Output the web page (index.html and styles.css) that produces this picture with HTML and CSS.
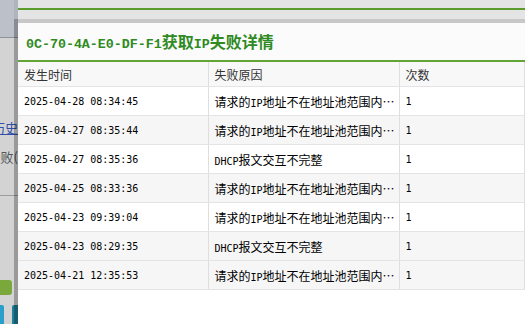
FILE: index.html
```html
<!DOCTYPE html>
<html lang="zh-CN">
<head>
<meta charset="utf-8">
<title>获取IP失败详情</title>
<link rel="stylesheet" href="styles.css">
</head>
<body>
<div class="side">
  <div class="side-top"></div>
  <div class="side-link"><span>查看历史</span></div>
  <div class="side-text"><span>获取失败(</span></div>
  <div class="side-rule"></div>
  <div class="side-btn"></div>
  <div class="side-tabs"><i class="tab-a"></i><i class="tab-b"></i></div>
</div>
<div class="dialog">
  <div class="dlg-top"><div class="top-line"></div></div>
  <div class="dlg-body">
    <h2 class="title"><span class="lat">0C-70-4A-E0-DF-F1</span>获取<span class="lat">IP</span>失败详情</h2>
    <table class="grid">
      <colgroup><col class="c1"><col class="c2"><col class="c3"></colgroup>
      <thead>
        <tr><th>发生时间</th><th>失败原因</th><th>次数</th></tr>
      </thead>
      <tbody>
        <tr><td class="mono">2025-04-28 08:34:45</td><td>请求的<span class="mono">IP</span>地址不在地址池范围内…</td><td class="mono">1</td></tr>
        <tr class="alt"><td class="mono">2025-04-27 08:35:44</td><td>请求的<span class="mono">IP</span>地址不在地址池范围内…</td><td class="mono">1</td></tr>
        <tr><td class="mono">2025-04-27 08:35:36</td><td><span class="mono">DHCP</span>报文交互不完整</td><td class="mono">1</td></tr>
        <tr class="alt"><td class="mono">2025-04-25 08:33:36</td><td>请求的<span class="mono">IP</span>地址不在地址池范围内…</td><td class="mono">1</td></tr>
        <tr><td class="mono">2025-04-23 09:39:04</td><td>请求的<span class="mono">IP</span>地址不在地址池范围内…</td><td class="mono">1</td></tr>
        <tr class="alt"><td class="mono">2025-04-23 08:29:35</td><td><span class="mono">DHCP</span>报文交互不完整</td><td class="mono">1</td></tr>
        <tr class="alt"><td class="mono">2025-04-21 12:35:53</td><td>请求的<span class="mono">IP</span>地址不在地址池范围内…</td><td class="mono">1</td></tr>
      </tbody>
    </table>
  </div>
</div>
</body>
</html>
```

FILE: styles.css
```css
html, body {
  margin: 0;
  padding: 0;
}
body {
  width: 525px;
  height: 324px;
  overflow: hidden;
  display: flex;
  font-family: "Noto Sans CJK SC", "Noto Sans", sans-serif;
  font-size: 12px;
  color: #000;
  background: #d3d3d3;
}

/* background page strip on the left */
.side {
  width: 18px;
  flex: none;
  display: flex;
  flex-direction: column;
  overflow: hidden;
  background: #d3d3d3;
}
.side-top {
  height: 39px;
  background: #bcc0c8;
  border-bottom: 1px solid #8f9196;
}
.side-link,
.side-text {
  display: flex;
  justify-content: flex-end;
  white-space: nowrap;
  font-size: 13px;
  line-height: 16px;
}
.side-link {
  margin-top: 82px;
  color: #2f4fa8;
  text-decoration: underline;
}
.side-text {
  margin-top: 13px;
  color: #555;
}
.side-rule {
  margin-top: 30px;
  height: 1px;
  background: #9c9c9c;
}
.side-btn {
  margin-top: 84px;
  width: 12px;
  height: 15px;
  background: #7ba83a;
  border-radius: 0 3px 3px 0;
}
.side-tabs {
  margin-top: 10px;
  height: 20px;
  display: flex;
  gap: 8px;
}
.tab-a {
  width: 4px;
  background: #2a9fcb;
  border-radius: 0 2px 0 0;
}
.tab-b {
  width: 6px;
  background: #1f7e99;
  border-radius: 2px 0 0 0;
}

/* dialog */
.dialog {
  flex: 1;
  display: flex;
  flex-direction: column;
  min-width: 0;
}
.dlg-top {
  height: 19px;
  background: #e4e4e4;
  box-shadow: -4px 0 0 rgba(0, 0, 0, 0.06);
}
.top-line {
  margin-top: 8px;
  height: 2px;
  background: #5b9d2c;
}
.dlg-body {
  flex: 1;
  background: #fff;
  border-top: 4px solid #c8c8c8;
  box-shadow: -4px 0 0 rgba(0, 0, 0, 0.27);
}
.title {
  margin: 0;
  padding: 8px 8px 5px;
  line-height: 20px;
  font-size: 16px;
  font-weight: bold;
  color: #2f8a22;
  background: #fbfbfb;
  border-bottom: 2px solid #63a534;
  white-space: nowrap;
}
.title .lat {
  font-family: "Liberation Mono", monospace;
  font-size: 13.3px;
}

.grid {
  width: 100%;
  border-collapse: collapse;
  table-layout: fixed;
}
.c1 { width: 190px; }
.c2 { width: 191px; }
.grid th,
.grid td {
  text-align: left;
  padding: 0 6px;
  border-right: 1px solid #dedede;
  border-bottom: 1px solid #e4e4e4;
  white-space: nowrap;
  overflow: hidden;
}
.grid th {
  height: 24px;
  font-weight: normal;
  color: #333;
  background: #f8f8f8;
}
.grid td {
  height: 28px;
}
.grid tr.alt td {
  background: #f6f6f6;
}
.mono {
  font-family: "DejaVu Sans Mono", monospace;
  font-size: 10px;
}
```
